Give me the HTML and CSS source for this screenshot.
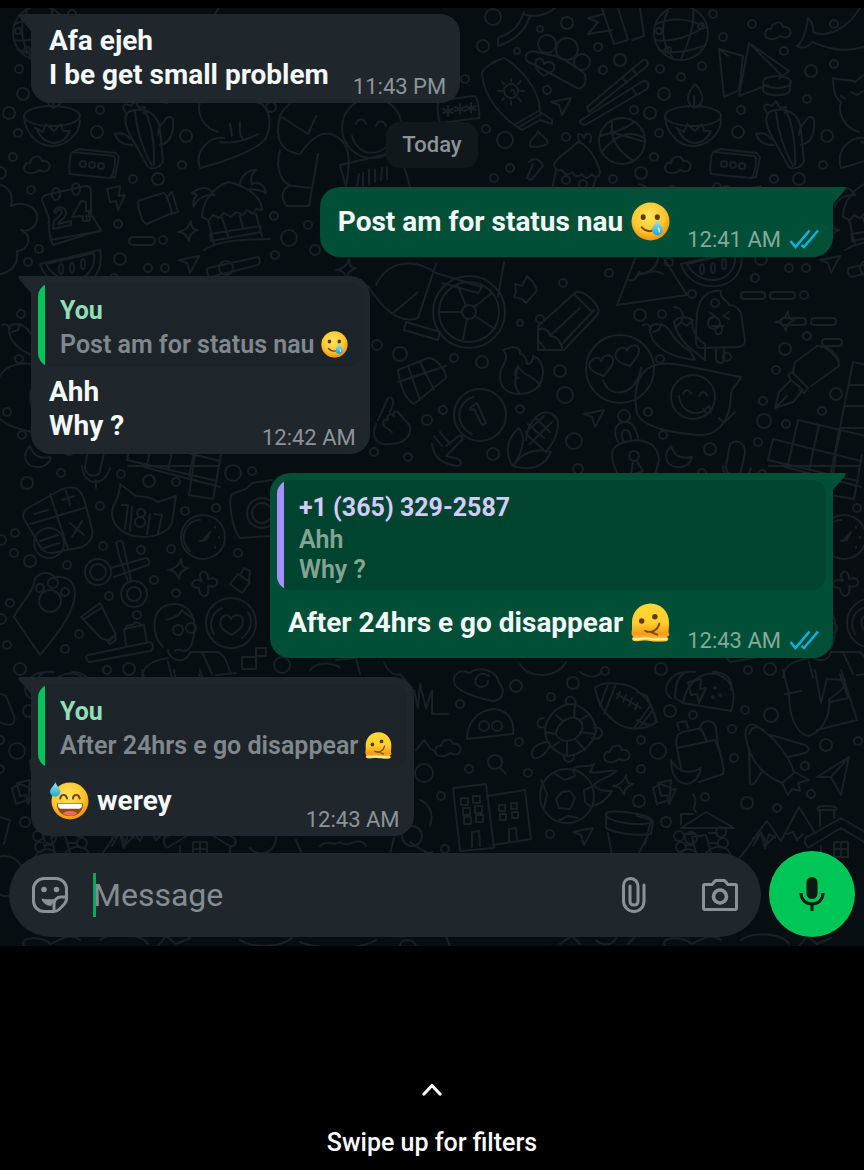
FILE: index.html
```
<!DOCTYPE html>
<html lang="en">
<head>
    <meta charset="UTF-8">
    <meta name="viewport" content="width=device-width, initial-scale=1">
    <title>Chat</title>
    <link rel="stylesheet" href="styles.css">
</head>
<body>
<!-- shared shapes -->
<svg class="defs" width="0" height="0" aria-hidden="true">
    <defs>
        <radialGradient id="skin" cx="45%" cy="35%" r="65%">
            <stop offset="0" stop-color="#ffe45c"/>
            <stop offset="0.65" stop-color="#fec62e"/>
            <stop offset="1" stop-color="#f4900c"/>
        </radialGradient>
        <linearGradient id="melt" x1="0" y1="0" x2="0" y2="1">
            <stop offset="0" stop-color="#fdd835"/>
            <stop offset="0.5" stop-color="#ffcf2e"/>
            <stop offset="0.8" stop-color="#f79a1b"/>
            <stop offset="1" stop-color="#ffd54a"/>
        </linearGradient>
        <linearGradient id="drop" x1="0" y1="0" x2="0" y2="1">
            <stop offset="0" stop-color="#9be8f5"/>
            <stop offset="1" stop-color="#1fa5d0"/>
        </linearGradient>
        <symbol id="tear" viewBox="0 0 40 40">
            <circle cx="20" cy="20" r="19.500" fill="url(#skin)"/>
            <ellipse cx="12.500" cy="15.500" rx="2.600" ry="3" fill="#5c3a0c"/>
            <ellipse cx="27" cy="15.500" rx="2.600" ry="3" fill="#5c3a0c"/>
            <path d="M11 26c4 4.500 10 5 13 2" fill="none" stroke="#6b4410" stroke-width="2" stroke-linecap="round"/>
            <path d="M27 18c1.500 4.500 5.500 7.500 5.500 10.500a5.500 5.500 0 0 1-11 0c0-3 4-6 5.500-10.500z" fill="url(#drop)"/>
            <path d="M28 27c1 1 1.500 2 1 3.500" fill="none" stroke="#c9f5fc" stroke-width="1.500" stroke-linecap="round"/>
        </symbol>
        <symbol id="melting" viewBox="0 0 40 40">
            <path d="M20 .5C9 .5 1 9 1 20c0 4 .3 6-.3 9-.5 2.500 0 4.500 1.800 5.500-2 1-2 4 1 4.500 4 .8 9-1 14-.3 5 .8 13 1.300 18.500.5 3-.5 3-3.500.5-4.500 3-.5 3.500-3 2-4.500C38.500 28 39 24 39 20 39 9 31 .5 20 .5z" fill="url(#melt)"/>
            <path d="M3 36.500c4 1.500 9-1 14-.2s13 1.200 19 .5" fill="none" stroke="#fff0a0" stroke-width="2" stroke-linecap="round"/>
            <circle cx="11" cy="18.500" r="2.800" fill="#5c3a0c"/>
            <circle cx="24.500" cy="14" r="2.800" fill="#5c3a0c"/>
            <path d="M14.500 28.500c6 3 13-.5 14.500-7.500M21 30l6 2.500" fill="none" stroke="#7a4d10" stroke-width="2" stroke-linecap="round"/>
        </symbol>
        <symbol id="sweat" viewBox="0 0 40 40">
            <circle cx="20.500" cy="20.500" r="19" fill="url(#skin)"/>
            <path d="M10.500 18c.5-5 6-5 7 0M23.500 18c.5-5 6-5 7 0" fill="none" stroke="#6b4410" stroke-width="2" stroke-linecap="round"/>
            <path d="M7 23h27c0 8-5.500 13-13.500 13S7 31 7 23z" fill="#8a4a12"/>
            <path d="M8 23.500h25c0 3-1 4.500-3 5H11c-2-.5-3-2-3-5z" fill="#fff"/>
            <path d="M13 33c4-3 11-3 15 0-4 3.500-11 3.500-15 0z" fill="#ef6a5a"/>
            <path d="M5.500 1c1 4 5 6 5 10a5.200 5.200 0 0 1-10.400 0C.1 7 4.500 5 5.500 1z" fill="url(#drop)"/>
        </symbol>
        <symbol id="ticks" viewBox="0 0 30 20">
            <path d="M1.500 12l5 6L20.500 1.500M12.500 16l2.500 2L29 1.500" fill="none" stroke="#0fb0dd" stroke-width="2.600"/>
        </symbol>
    </defs>
</svg>

<main class="chat">
    <svg class="wallpaper" viewBox="0 8 864 938" preserveAspectRatio="xMidYMin slice" aria-hidden="true">
        <g id="tile">
            <g id="dots"></g>
            <!-- globe -->
            <circle cx="40" cy="33" r="27"/>
            <path d="M27 11c-8 14-6 32 4 46M52 10c2 14-4 32-12 49M15 24c16-7 34-6 50 4M14 40c14 2 32-2 48-12M18 50c12 4 28 2 44-4"/>
            <circle cx="18" cy="31" r="3"/><circle cx="60" cy="26" r="3"/><circle cx="27" cy="50" r="3"/>
            <!-- clouds -->
            <path id="cloud" d="M26 172c-4-4-1-10 4-9 1-7 10-9 12-2 6-1 10 4 6 9-3 3-7 1-9 0-4 4-10 4-13 2z"/>
            <use href="#cloud" x="100" y="-134"/><use href="#cloud" x="411" y="583"/><use href="#cloud" x="580" y="589"/>
            <!-- folded paper and tape -->
            <path d="M78 49l5 48 15-7 4-34zM78 49l9 7M98 96l10-53 40 28-10 8M98 96l29-11M108 43l32 32"/>
            <ellipse cx="136" cy="82" rx="14" ry="6"/><path d="M122 82v8c2 7 26 7 27 0v-8"/>
            <!-- whale -->
            <path d="M156 46c6-4 9-14 11-28 4 4 6 9 5 14 12 6 35-2 48-26M156 46c8 4 12 0 15-4 18 8 38 12 58 2"/>
            <!-- oil lamp -->
            <ellipse cx="52" cy="116" rx="28" ry="10"/>
            <path d="M24 118c2 16 14 28 28 28s28-12 28-26M53 108c-10-6-6-16 1-24 8 8 12 20-1 24zM53 108v-12M35 128l8 4 3-8 8 7 7-7 2 7h7c-4 8-8 11-15 12-8 0-14-4-19-15z"/>
            <!-- cactus -->
            <path d="M148 167l-18-32c-6-12-8-24 5-25 16-2 24 8 25 20l3 32c-4 6-10 8-15 5zM135 112c2 18 8 38 17 54M145 111c6 12 10 32 9 54M126 113c-6-8-1-10 5-7l4-5 4 7 6-1-1 6M160 145c10-2 14-12 13-26-4-4-7-2-9 3-4 3-6 8-6 13M133 145c-10 0-16-4-18-11 6-2 12 0 15 5"/>
            <!-- voice box -->
            <path d="M73 152c-4 0-4 20-3 22l40 4c4-2 6-18 4-22l-41-4zM73 152l6-3 37 4 3 4-4 20-5 1"/>
            <circle cx="83" cy="164" r="3"/><circle cx="92" cy="165" r="3"/><circle cx="101" cy="166" r="3"/>
            <!-- fox -->
            <path d="M192 78c12 4 16 0 22 4l12-10 2 14c12 6 24 16 34 18 10 10 8 24 4 34-10 14-50 26-66 30-6-18 10-32 24-30M192 78c0 10 2 20 8 24-4 12 4 26 18 30M200 96l4 3M210 92l6 3 6-4M230 124l2 12M240 122c0 6-1 12 2 16M258 134c-10 6-26 10-38 8"/>
            <!-- calendar -->
            <path d="M42 200c0-4 3-5 12-7l32-7c5 0 5 4 5 8v20l10 16-48 15c-3-6-5-18-4-27l-7-18zM50 240l51-9M91 214l-2 7"/>
            <ellipse cx="56" cy="194" rx="4" ry="6"/><ellipse cx="76" cy="189" rx="4" ry="6"/>
            <path d="M54 212c3-7 12-6 12 1 0 5-6 7-8 11l13-3v4l-18 4 1-8c6-5 9-9 7-11-2-2-4 1-5 3zM83 221v-5l-11 1 9-16 5 1v9h3v5h-3l1 5z"/>
            <!-- bolts -->
            <path id="bolt" d="M107 189l13-3-1 10 6-1-7 15-2-9-6 1z"/>
            <use href="#bolt" x="-60" y="493"/><use href="#bolt" x="-90" y="594"/>
            <!-- video camera -->
            <path d="M138 201l25-8c4 0 8 16 9 20l-25 11c-6 0-9-19-9-23zM166 198l6-6 6 20-6 2"/>
            <!-- hut -->
            <path d="M202 217c0-16 12-30 26-35 20 4 34 16 34 28l-6-1-3 5-6-4-4 5-7-3-5 5-7-4-5 5-6-3-4 5zM208 220l6 24M256 214l6 22M210 234l50-8 1 6-50 9zM222 218l6 18M240 216l3 12M204 250c20-12 44-10 66-11M192 193c10-8 18-6 22 2-10 0-18 4-20 12-2-5 0-9 3-12zM240 186c0-10 8-16 16-16-6 6-6 10-4 14 6-3 12 0 14 9-6-4-16-4-20-4"/>
            <!-- pill and sparkles -->
            <rect x="129" y="237" width="26" height="8" rx="4"/>
            <path id="spark" d="M191 221c0 6 2 9 7 9-6 2-9 5-9 11-2-6-5-9-11-9 6-1 11-4 13-11z"/>
            <use href="#spark" x="-10" y="338"/><use href="#spark" x="435" y="554"/><use href="#spark" x="-44" y="90"/><use href="#spark" x="158" y="38"/>
            <!-- melon -->
            <path d="M40 264l60-14c4 22-8 34-24 36-18 2-32-8-36-22zM46 264l48-11c2 16-8 26-20 27-14 1-24-8-28-16z"/>
            <ellipse cx="61" cy="269" rx="2" ry="5"/><ellipse cx="72" cy="268" rx="2" ry="5"/><ellipse cx="83" cy="264" rx="2" ry="5"/>
            <!-- arrows -->
            <path id="dart" d="M179 260l20-4-9 17-3-10z"/>
            <use href="#dart" x="372" y="-158"/><use href="#dart" x="405" y="154"/><use href="#dart" x="394" y="572"/>
            <!-- flute -->
            <path d="M208 268l50-11c3 2 2 7 0 8l-48 12c-3-2-4-7-2-9z"/><circle cx="226" cy="268" r="7"/>
            <!-- flower at the edge -->
            <path d="M-2 184c10 2 16 10 13 22 14-6 28 2 26 14-2 10-12 12-16 10 12 6 8 20-4 21 2 16-8 22-20 24"/>
            <!-- person with phone -->
            <path d="M290 104c-8 6-9 10-10 12l28 18 8-18M280 116c-6 24 2 36 20 38 10-14 22-26 36-18 12 8 16 18 10 50M280 150c-6 22 4 34 12 36l20 2M318 154l-9 52h-22c-8-8-4-18 2-20"/>
            <circle cx="372" cy="128" r="30"/><path d="M356 124c2-6 8-6 10 0M376 126c2-6 8-6 10 0M352 136c6 22 32 22 40 2M340 165l60-14 10 36M340 165l6 22M357 186l2-12M363 186v-13M369 184v-14M375 182v-12M381 180l1-12M387 179v-12"/>
            <!-- bag, bamboo, phone -->
            <path d="M498 38c12-4 22-12 26-26M498 38v8c18-6 28-16 32-30M523 14c10 4 24 2 34-8M602 8l12 36 14-4-10-32M612 30l-24 4 10-12-10-4 16-4M640 8l4 28-12 4"/>
            <!-- teddy -->
            <circle cx="547" cy="44" r="9"/><circle cx="567" cy="49" r="11"/><circle cx="582" cy="62" r="8"/>
            <path d="M533 64c-14-4-6-16 4-12l18 4c12 4 20 10 30 18 2 10-2 15-8 14l-44-24zM536 60c6-4 8 2 8 4 4-4 12-2 10 6l-10 6c-6-4-10-8-8-16z"/>
            <!-- sun cream -->
            <path d="M482 74c0-6 14-14 22-16 14 8 36 30 36 54l12 8v4l-12-4-18 10c-20-12-38-32-40-56zM516 124l24-14M519 127l22-13"/>
            <circle cx="511" cy="91" r="7"/><path d="M511 91c1-3 5 0 3 3M511 79v2M511 101v4M498 91h4M520 91h4M502 82l2 2M518 98l3 3M502 100l2-2M518 84l3-3"/>
            <!-- chopsticks -->
            <path d="M587 107l56-47c4-1 6 3 4 6l-58 46zM581 120l62-39c5-1 7 5 4 8l-62 36c-4 0-6-3-4-5zM632 69l5 6M622 77l5 6M632 88l4 6"/>
            <!-- password -->
            <path d="M438 104c0-3 3-4 36-8 4 0 6 18 5 22l-38 5c-3-1-4-15-3-19zM448 106v10M443 109l10 4M443 113l10-4M460 104v10M455 107l10 4M455 111l10-4M471 103v10M466 106l10 4M466 110l10-4"/>
            <!-- basketball -->
            <circle cx="622" cy="141" r="23"/><path d="M612 121c-2 16 4 30 22 40M600 136c14-4 28-8 34-14M602 152c14-18 28-22 42-14M611 132l34 10"/>
            <!-- cupcake and sweets -->
            <path d="M554 164c6-10 14-12 24-22 8 2 18 14 22 30 0 6-6 6-8 2-4 6-8 4-10 0-4 4-8 2-10-2-4 4-8 2-10-2-4 2-8-2-8-6zM556 170l-4 20M596 178l-4 12M580 142c-6-10 2-10 4-4 2-8 10-4 6 4M530 146c-2-6 6-8 8-15 2 6 10 6 9 11 4 4-16 6-17 4zM529 162c6-6 12-2 14 4l-12 14-4-2 6-14"/>
            <circle cx="566" cy="180" r="4"/><circle cx="583" cy="184" r="4"/>
            <!-- helmet and wheel -->
            <circle cx="469" cy="312" r="36"/><circle cx="469" cy="312" r="30"/><circle cx="469" cy="312" r="7"/>
            <path d="M462 312h-23M466 306l-8-20M474 307l18-14M475 316l20 13M467 319l-4 20M376 285c12-26 40-26 60-12l46 14-4 6-36-10M436 264l-18 54c-16 6-32-4-50-32M392 314l26-22M404 330l34 10 2-8-34-10zM504 262l-6 34"/>
            <!-- puzzle, pencil -->
            <path d="M515 284l7 2 5-10 6 6 4 8-4 5-7 8-4-4-8-2 2-5z"/>
            <path d="M538 350v-24l38-34c8-2 26 14 22 22l-34 36zM538 330c6-4 12 2 12 6 6 0 10 4 12 12M552 334l28-26M562 344l32-34M574 294l18 18M538 340l8 10"/>
            <!-- mountain -->
            <path d="M617 305l22-56 14-8 34 54zM629 280c6 2 8-4 10-8 6 6 12-6 24 2"/>
            <!-- fire, clock -->
            <path d="M503 350c6 6 2 12-2 20-4 14 4 24 18 24 16 0 24-10 24-22 0-8-4-14-10-16 0 6-2 8-6 8 0-6-4-10-7-10 1-8-8-8-17-4zM520 394c-8-10-4-16-2-28 4 10 18 10 22 20M518 366c-4 6-4 10 0 12"/>
            <circle cx="480" cy="415" r="26"/><path d="M472 434c-20-10-14-34 2-37M470 408l7-5 9 20-4 2-8-16-3 1z"/>
            <!-- heart-eyes face -->
            <circle cx="620" cy="369" r="34"/><path d="M603 380c6 20 34 16 38-12M604 376c-14-4-18-10-12-16 4-4 8-2 9 1 2-6 10-8 12-2 1 6-4 10-9 17zM630 366c-14-4-18-10-12-16 4-4 8-2 9 1 2-6 10-8 12-2 1 6-4 10-9 17z"/>
            <!-- corn, lock -->
            <path d="M513 466c-10-14-4-30 6-38 6 8 6 20-6 38 6-10 20-20 38-14-6 14-20 20-38 14zM526 440c2-20 16-32 26-26 12 6 4 26-6 38M528 424l16 14M536 418l14 14M526 434l20 18M530 444l22-22M526 432l18-16"/>
            <path d="M612 456c0-10 6-14 26-16 14 2 20 8 21 20l-4 16h-36c-4-6-6-12-7-20zM618 442c-6-12-2-20 8-20 6 0 10 6 12 16M624 442c-4-8-2-12 2-12 3 0 4 3 5 9"/><circle cx="634" cy="456" r="5"/><path d="M633 461l-2 14 12-4-7-11"/>
            <!-- basket and hands -->
            <path d="M398 370l30-12c10 0 18 14 18 20l-32 26c-8-4-14-18-16-34zM398 382l48-16M408 366l12 34M420 362l14 28"/>
            <path d="M376 424c-6 14 2 22 14 20 12 0 22-6 20-18l-12-14c-4-2-6 2-4 4-4-4-8 0-6 4-4-2-6 2-4 6l8 6M378 420l10-22c4-2 6 2 5 6l-3 8M434 436l8 10M440 432l10 12M432 444c2 14 10 20 26 22 6-2 2-8-4-8l-8-2 16-16c2-4-2-6-6-2l-10 8"/>
            <!-- peppers -->
            <path d="M9 327c6-6 16-2 20 4 4 8 10 14 20 20l5 9c-18-2-34-8-42-20-3-6-4-9-3-13zM33 322c4-6 14-6 18-2 0 12 6 20 13 24v16l-10-8c-12-8-18-18-21-30zM12 332l6-2 2-6M34 328l6-6 6 4 6-6M2 325c4-2 6 0 8 4M41 320c2-6 0-12-8-13"/>
            <!-- ice lolly -->
            <path d="M60 348c-6 0-6-4-4-34 2-20 14-24 24-23-2 8 6 8 8 14 6 0 10 4 12 8l4 28c0 4-4 6-8 6zM75 348v12c2 4 7 4 8 0v-13M68 312l6 4-6 3M88 312l-6 4 6 3M71 326h12M74 327c0 10 7 10 7 0"/>
            <!-- dashes -->
            <rect x="100" y="292" width="24" height="7" rx="3"/><rect x="129" y="292" width="25" height="7" rx="3"/><circle cx="163" cy="295" r="4"/><rect x="140" y="318" width="25" height="7" rx="3"/><rect x="170" y="318" width="25" height="7" rx="3"/><rect x="181" y="339" width="20" height="7" rx="3"/>
            <!-- nib -->
            <path d="M134 408l4-16 12-12 12 10-10 12zM150 380l-3-5 4-3 16 16-4 5-5-3M152 372l2-10 22-16c8-2 24 14 22 20l-28 20M180 347c8-2 18 10 18 16M134 408l12-12"/>
            <!-- chat bubble -->
            <path d="M6 369c18-12 40-2 94 8-2 6-8 8-10 16 0 26-12 44-34 42-20-2-54-6-60-22-4-20 0-36 10-44z"/><circle cx="52" cy="397" r="22"/>
            <path d="M42 394c2-5 7-5 8 0M58 396c2-5 7-5 8 0M38 396c2 18 20 22 30 10l2 6-4 2-4-5M78 418l5 5 11-11"/>
            <!-- crossword -->
            <path d="M132 439l88 22M127 460l90 21M132 439l-5 21M157 420l68 16M157 420l-10 45M178 425l-10 45M200 430l-11 46M212 362l-22 110M212 362l14 3M208 385h18M204 406h20M200 428h24"/>
            <path d="M128 466l90 0M144 467l76 20M195 455l-6 40 24 4 8-44"/>
            <!-- moon and mic -->
            <path d="M30 446c-8 8-6 20 6 21 8 1 14-4 15-10-12 3-18-2-21-11zM89 444c8-6 18 0 14 14l-4 16c-8 4-14 0-14-8zM82 466c2 22 24 20 28 2M96 480v8"/>
            <!-- calculator -->
            <path d="M28 508l34-19c14-4 18 0 22 10l8 30c2 8-2 14-10 18l-30 6c-10 0-12-6-16-14l-12-20c-2-4 0-8 4-11zM30 524l54-16M50 494l18 55M62 500l12-4M66 491l4 14M34 514l14-4M70 523l14 12M82 521l-10 16"/><circle cx="49" cy="543" r="15"/><path d="M40 541l18-6M41 549l18-6"/>
            <!-- cat with 181 -->
            <path d="M120 484l16 12c8 0 16 2 22 6l18-6-4 26c-6 20-56 22-60-7-1-12 8-14 8-31zM122 505l6 0-3 24M132 507l-2 24M154 514l8 1-4 18M150 514l-3 20"/><circle cx="141" cy="513" r="4"/><circle cx="140" cy="522" r="5"/>
            <!-- gauge -->
            <circle cx="203" cy="537" r="22"/><path d="M190 551c-14-14-2-32 10-31M202 541l8-9-4 8-6 1zM215 527v1M219 537v1M215 547v1"/>
            <!-- scissors -->
            <circle cx="98" cy="572" r="13"/><circle cx="98" cy="572" r="8"/><circle cx="134" cy="594" r="13"/><circle cx="134" cy="594" r="7"/>
            <path d="M110 568l36-10c4 1 4 5 2 7l-34 12M128 581l-8-22-4-16c2-3 6-3 7 0l8 38"/>
            <!-- plus and bag -->
            <path d="M201 573c3-3 7-1 7 6 6-2 10 0 9 5-2 3-6 3-9 2 1 6 0 10-4 10-4-1-5-5-5-8-6 0-8-3-6-6 2-3 6-2 9-1-2-3-3-6-1-8zM230 584l8-10 12 8-8 11zM240 575l4-7 6 3-1 10"/>
            <!-- ice-cream cone -->
            <path d="M14 617c6-14 18-22 20-34 2-12 16-12 20-6 14-2 24 6 20 24-4 16-14 30-34 54z"/><circle cx="40" cy="588" r="4"/><circle cx="53" cy="583" r="5"/><circle cx="65" cy="592" r="4"/><circle cx="50" cy="601" r="11"/>
            <!-- tube and brush -->
            <path d="M81 617l19-14 16 32-7 6-8-3zM84 619l19-12M107 641l8-6 1 5-6 4zM88 655l62-13c4 2 4 8 0 9l-60 11c-4-1-5-6-2-7zM126 645l-2-16 20-4 3 17M126 629c-2-6 8-2 8-6 6-2 6 2 8 2"/>
            <!-- girl with glasses -->
            <path d="M163 647c-12-12-12-36 4-42 16-4 26 4 28 22-2 12-2 24-12 24-4-2-6-2-8 0M166 620c6-2 14-4 16-10 4 6 10 6 12 10M168 650c0 10 18 16 22 2M142 678c0-14 14-18 26-20M190 652l28 0c8 4 10 14 12 20M168 662l4 16M202 652l10 22"/><circle cx="178" cy="630" r="5"/><circle cx="191" cy="628" r="5"/>
            <!-- heart badge -->
            <circle cx="231" cy="623" r="25"/><path d="M231 635c-10-6-12-10-10-16 4-6 8-4 10 0 4-6 12-4 12 2 0 6-4 10-12 14zM214 634c-6-10-2-22 8-26M248 612c6 10 2 20-6 26"/>
            <!-- camera -->
            <path d="M232 494l14-5 6-6 20-3M232 494c-4 6 0 36 8 44l30-2"/><circle cx="262" cy="513" r="15"/><circle cx="262" cy="513" r="10"/><path d="M242 657h14v12h-14zM256 648h10v8h-10z"/>
            <!-- cloud refresh, alien -->
            <path d="M455 685c-4-12 6-16 14-12 12-8 28-2 30 10 8 8 2 18-6 18-12-2-32-8-38-16z"/><path d="M489 676c-8-6-16 2-13 8 4 6 12 2 12-3M467 739c0-16 10-28 26-30 14 0 22 12 20 25z"/><circle cx="484" cy="726" r="5"/><circle cx="497" cy="726" r="5"/>
            <circle cx="495" cy="762" r="7"/><path d="M500 768l6 6"/>
            <!-- turtle -->
            <path d="M545 732c0-14 12-26 24-28 14 0 26 14 27 26-2 14-14 24-28 26-12-2-22-12-23-24zM556 734c0-8 10-18 20-16 8 4 8 10 4 16-6 8-20 10-24 0zM545 732l11 2M556 715l7 6M575 704l-1 14M590 714l-10 6M595 734l-15-2M585 750l-9-10M567 756v-14M553 746l6-4M566 704c-2-10 10-10 10 1M546 726c-10 6-12-8-2-8M550 746c-8 14-20 16-18 6 2-6 6-8 14-10M564 756c0 8 10 8 10-1M594 728c10-4 12 14-2 10"/>
            <!-- rugby ball -->
            <path d="M595 688c8-8 36-6 46 6 10 8 14 20 16 28-14 10-34 8-44-2-10-8-16-20-18-32zM604 714l12-30M600 706l8-22M634 728l16-22M640 727l13-17M617 694l24 14M620 692l-3 6M626 695l-3 7M632 698l-3 8M638 703l-3 6"/>
            <!-- football -->
            <circle cx="567" cy="796" r="27"/><path d="M562 792l8-1 5 7-5 11-11-1-3-9zM555 774l10 6 10-4-2-6M541 780l6 14-3 14M594 786l-10 4 1 12 5 4M558 821l10-5 10 2M574 768c8-4 16 0 20-4l-4 8c8 2 16-2 26-1-8 8-18 8-22 14 4 6 10 6 18 6-6 10-14 14-20 15"/>
            <!-- buildings -->
            <path d="M453 788l33-4 8 64-34 3zM487 796l38-6 6 49-38 6M472 847v-15l7-1 1 15M509 841v-12l7-1 1 12M461 798h7v7h-7zM473 796h7v7h-7zM463 808h7v7h-7zM475 806h7v7h-7zM464 817h7v7h-7zM476 815h7v7h-7zM499 805h6v6h-6zM511 803h6v6h-6zM500 814h6v6h-6zM512 812h6v6h-6z"/>
            <!-- cup -->
            <path d="M606 814c0-6 48 0 47 8l-2 12c-12 2-34 0-45-6zM606 816c8 8 36 10 47 6M608 833l4 22M648 835l-10 20"/>
            <!-- taco -->
            <path d="M42 703c4-22 20-32 34-29 16 6 20 20 14 37zM42 703l-8-5c0-22 8-28 20-26M30 698c-12-8 0-26 14-26M72 672c14 0 20 8 18 18"/><circle cx="74" cy="688" r="1"/><circle cx="72" cy="697" r="1"/><circle cx="79" cy="695" r="1"/>
            <!-- jar and bananas -->
            <path d="M36 748l38-8c6 14 10 26 8 34l-24 8M36 748l4 20M36 748c-2-10 0-14 6-16l18-4 6 14M38 730l-2-7 9-2 2 7M59 730c0-12 16-12 16 0l2 14 6 26M30 760c0 30 26 30 30 8-10 6-22 6-30-8z"/>
            <!-- rocket -->
            <path d="M105 739c-2-10 2-16 8-14 20 10 36 32 40 48l-12 10c-20-8-32-24-36-44zM108 734c2-8 10-8 14-4M130 735l34 10c6 4 4 6 0 8l-16 4M108 748l1 36c4 4 8-8 12-12M141 783l6 12 4-6 8 2-2-8 11-3-14-8"/>
            <!-- legs and card -->
            <path d="M142 670l6 24c0 20 6 38 18 42 14-2 24-20 22-36 4-6 18-10 16-20l-18-1-6 24-6-33M144 694l16-3M176 730l40-10-16-50M189 702l18-4-8-24M216 675l20-2"/>
            <!-- paper plane -->
            <path d="M176 777l32-20-8 38-10-18zM190 777l18-20"/>
            <!-- log cabin -->
            <path d="M40 828l25-16 28 16zM40 824v-10h12M55 812c-6-6 4-8-3-18M55 853l-4-16 14-2 5 18"/><circle cx="38" cy="836" r="5"/><circle cx="40" cy="847" r="5"/><circle cx="80" cy="832" r="5"/><circle cx="82" cy="843" r="5"/><path d="M43 834h10M44 845h8M68 833h8M69 843h8"/>
            <!-- peaks and cottage -->
            <path d="M98 858c10-10 18-26 28-37l14 20 18-34 16 26M112 838l8-4 4 14 4-14 6 4M146 834l6-2 4 8 6-6M166 846c-4-4-2-10 2-10l32-18 34 20c4 4 0 10-4 8l-30-18-30 18c-2 2-4 2-4 0zM180 846v24M230 848v24M179 826v-16h14v8M178 811c-4-4 0-5 8-5s12 2 8 5M193 842h14v15h-14zM200 842v15M193 849h14"/>
            <!-- crowd along the bottom edge -->
            <path d="M-4 858c18-8 34 10 26 28-8 14-22 12-26 4M34 858c8-14 26-10 24 4M64 854c10-12 26-8 26 4M112 846l8-14 6 12 8-8M250 848c10 12 28 2 26-12M296 840l6 14M320 846c10-8 12 2 20-4 8 8 20-8 26 4M394 838l-4 16M410 842c10 6 18 14 22 10M24 946c-6-10 20-10 26-2 10-4 20-12 30-4M100 940c10-8 40-8 48 4M158 946l8-10 10 8 14-6M240 940c12 8 40 8 52-2M300 942c20 8 60 8 76-2M400 946c0-8 14-8 16 0M450 946l-4-10M560 944l12-8 8 8M596 940c6 6 16 6 20-2M628 944l8-8"/>
            <circle cx="50" cy="838" r="6"/><circle cx="412" cy="836" r="10"/><path d="M414 690l4 18 2-24 6 24 6-18 0 24h16"/><path d="M-4 692l10 4 8 20c2 8-2 10-10 8l-8-4M12 788l8-4 10 4-2 12-12 4zM416 750l8-10 6 8 6 4M420 800c10 4 14 14 10 26M-4 816l14 4-6 24"/>
            <path d="M310 670c10-12 30-4 30-2M336 660l20-2 4 16M384 662c4 10 10 14 16 12l12 14-10 6M520 664c8 16 38 14 46-2M580 672c8 6 16 6 22 0"/>
        </g>
        <use href="#tile" x="641"/>
    </svg>

    <article class="bubble in">
        <div class="body">
            <p class="text">Afa ejeh<br>I be get small problem</p>
            <time class="time">11:43 PM</time>
        </div>
    </article>

    <div class="day">Today</div>

    <article class="bubble out">
        <div class="body">
            <p class="text tall">Post am for status nau <svg class="emoji" role="img" aria-label="smiling face with tear"><use href="#tear"/></svg></p>
            <time class="time">12:41 AM</time>
            <svg class="ticks" role="img" aria-label="Read"><use href="#ticks"/></svg>
        </div>
    </article>

    <article class="bubble in">
        <blockquote class="quote green">
            <p class="name">You</p>
            <p class="quoted tall">Post am for status nau <svg class="emoji" role="img" aria-label="smiling face with tear"><use href="#tear"/></svg></p>
        </blockquote>
        <div class="body">
            <p class="text">Ahh<br>Why ?</p>
            <time class="time">12:42 AM</time>
        </div>
    </article>

    <article class="bubble out">
        <blockquote class="quote purple">
            <p class="name">+1 (365) 329-2587</p>
            <p class="quoted">Ahh<br>Why ?</p>
        </blockquote>
        <div class="body">
            <p class="text tall">After 24hrs e go disappear <svg class="emoji" role="img" aria-label="melting face"><use href="#melting"/></svg></p>
            <time class="time">12:43 AM</time>
            <svg class="ticks" role="img" aria-label="Read"><use href="#ticks"/></svg>
        </div>
    </article>

    <article class="bubble in">
        <blockquote class="quote green">
            <p class="name">You</p>
            <p class="quoted tall">After 24hrs e go disappear <svg class="emoji" role="img" aria-label="melting face"><use href="#melting"/></svg></p>
        </blockquote>
        <div class="body">
            <p class="text tall"><svg class="emoji" role="img" aria-label="grinning face with sweat"><use href="#sweat"/></svg> werey</p>
            <time class="time">12:43 AM</time>
        </div>
    </article>

    <form class="composer">
        <div class="field">
            <button type="button" class="icon" aria-label="Stickers">
                <svg width="36" height="36" viewBox="0 0 36 36" fill="none" stroke="#8b9297" stroke-width="3">
                    <path d="M12 1.500h12A10.500 10.500 0 0 1 34.500 12v10c0 2-1 4-2.500 5.500l-5 5c-1.500 1.500-3.500 2-5.500 2H12A10.500 10.500 0 0 1 1.500 24V12A10.500 10.500 0 0 1 12 1.500z"/>
                    <path d="M34 20h-5c-4 0-7 3-7 7v7"/>
                    <path d="M9.500 21.500c5 1 9 1 13.500.5l-4 7c-5-.5-9-3.500-9.500-7.500z" fill="#8b9297" stroke="none"/>
                    <circle cx="12" cy="12.500" r="2.800" fill="#8b9297" stroke="none"/>
                    <circle cx="24.500" cy="12.500" r="2.800" fill="#8b9297" stroke="none"/>
                </svg>
            </button>
            <span class="caret"></span>
            <input class="input" type="text" placeholder="Message" aria-label="Message">
            <button type="button" class="icon" aria-label="Attach">
                <svg width="24" height="36" viewBox="0 0 24 36" fill="none" stroke="#8b9297" stroke-width="3" stroke-linecap="round">
                    <path d="M22 8v16c0 6-4.500 10.500-10 10.500S1.500 30 1.500 24V9c0-4.500 3-7.500 7-7.500s7.500 3 7.500 7.500v15c0 2.500-1.700 4-4 4s-4-1.500-4-4V9"/>
                </svg>
            </button>
            <button type="button" class="icon camera" aria-label="Camera">
                <svg width="36" height="32" viewBox="0 0 36 32" fill="none" stroke="#8b9297" stroke-width="3" stroke-linejoin="round">
                    <path d="M3 5.500h7l3.500-4h9l3.500 4h7c1 0 1.500.5 1.500 1.500v22c0 1-.5 1.500-1.500 1.500H3c-1 0-1.500-.5-1.500-1.500V7c0-1 .5-1.500 1.500-1.500z"/>
                    <circle cx="18" cy="17.500" r="6.500" stroke-width="3.600"/>
                </svg>
            </button>
        </div>
        <button type="button" class="mic" aria-label="Voice message">
            <svg width="26" height="34" viewBox="0 0 26 34" fill="none" stroke="#0a1a12" stroke-width="3">
                <rect x="7.500" y="0" width="11" height="22" rx="5.500" fill="#0a1a12" stroke="none"/>
                <path d="M2 16c0 7 5 11 11 11s11-4 11-11M13 27v7"/>
            </svg>
        </button>
    </form>
</main>

<footer class="footer">
    <button type="button" class="swipe">
        <svg width="20" height="13" viewBox="0 0 20 13" fill="none" stroke="#fff" stroke-width="3.200" stroke-linecap="round" stroke-linejoin="round" aria-hidden="true"><path d="M2 11l8-8.500 8 8.500"/></svg>
        <span>Swipe up for filters</span>
    </button>
</footer>

<script>
    // small circles of the wallpaper: x, y, radius
    var dots = [
        [19,69,4],[23,94,6],[9,113,6],[18,133,4],[13,157,4],[100,110,4],[97,132,6],[186,136,6],[182,165,4],[133,179,4],
        [158,179,6],[31,190,4],[118,224,4],[39,249,4],[28,262,4],[120,259,6],[148,268,4],[165,268,4],[274,216,4],[275,255,4],
        [289,238,8],[308,225,4],[271,107,5],[315,250,5],[163,240,4],[493,17,8],[567,23,6],[540,29,3],[483,46,6],[517,51,3],
        [598,47,4],[620,60,6],[603,70,4],[40,77,4],[465,79,4],[547,90,4],[505,140,8],[566,137,4],[486,129,4],[510,168,4],
        [494,178,4],[634,110,4],[613,179,4],[0,173,6],[72,14,4],[82,37,4],[111,24,4],[143,51,4],[170,71,6],[193,24,4],
        [193,64,4],[61,66,4],[166,99,4],[563,283,4],[609,273,4],[114,278,4],[540,319,4],[520,323,3],[640,315,6],[21,314,4],
        [74,303,4],[51,294,4],[73,323,6],[144,349,6],[86,357,4],[166,336,4],[135,370,4],[19,359,4],[454,358,4],[482,362,6],
        [560,371,6],[565,395,8],[520,409,4],[443,410,4],[195,394,6],[181,411,4],[122,401,4],[123,421,7],[145,424,4],[117,442,4],
        [69,449,6],[22,435,4],[7,412,4],[624,416,6],[574,441,8],[493,454,6],[578,469,5],[377,345,5],[400,354,7],[374,452,4],
        [408,457,4],[427,420,5],[27,483,6],[61,473,4],[15,533,4],[1,540,5],[14,553,4],[30,561,6],[67,565,4],[100,506,4],
        [103,546,4],[141,550,4],[171,549,4],[149,481,6],[176,482,4],[185,511,4],[216,508,4],[233,473,8],[252,471,4],[238,553,4],
        [154,580,4],[109,596,4],[176,593,4],[137,615,4],[79,634,4],[65,649,4],[20,669,6],[10,603,4],[7,645,4],[1,619,5],
        [107,670,4],[129,669,6],[282,665,8],[121,474,4],[516,686,6],[573,683,6],[460,704,4],[551,697,4],[605,671,4],[519,742,4],
        [469,769,4],[528,773,4],[441,796,4],[0,740,4],[17,751,8],[0,769,4],[639,801,6],[29,711,6],[52,715,4],[104,710,4],
        [130,715,7],[91,729,4],[93,758,4],[185,745,6],[217,741,4],[164,766,4],[170,794,4],[106,803,6],[64,797,4],[25,822,5],
        [136,808,4],[550,834,4],[445,849,4],[424,773,9]
    ];
    var group = document.getElementById("dots");
    for(var i = 0; i < dots.length; i++){
        var dot = document.createElementNS("http://www.w3.org/2000/svg", "circle");
        dot.setAttribute("cx", dots[i][0]);
        dot.setAttribute("cy", dots[i][1]);
        dot.setAttribute("r", dots[i][2]);
        group.appendChild(dot);
    }
</script>
</body>
</html>
```
FILE: styles.css
```
*{
    padding: 0;
    margin: 0;
    box-sizing: border-box;
}
body{
    display: flex;
    flex-direction: column;
    min-height: 100vh;
    padding-top: 8px;
    background-color: #000;
    color: #f5f8f9;
    font-family: Roboto, "Liberation Sans", sans-serif;
}
button{
    border: none;
    background: none;
    color: inherit;
    font: inherit;
    cursor: pointer;
}
svg{
    display: block;
}
.defs{
    position: absolute;
}

/* chat */
.chat{
    position: relative;
    display: flex;
    flex-direction: column;
    gap: 19px;
    padding: 6px 31px 9px;
    background-color: #070e12;
    overflow: hidden;
}
.wallpaper{
    position: absolute;
    top: 0;
    left: 0;
    width: 100%;
    height: 100%;
    fill: none;
    stroke: #192125;
    stroke-width: 2;
    stroke-linecap: round;
    stroke-linejoin: round;
}
.day{
    position: relative;
    align-self: center;
    padding: 0 16px;
    border-radius: 14px;
    background-color: #10181c;
    color: #8d9498;
    font-size: 22px;
    font-weight: 500;
    line-height: 46px;
}

/* bubbles */
.bubble{
    position: relative;
    max-width: 90%;
    padding: 7px 7px 3px;
    border-radius: 20px;
}
.bubble:before{
    content: "";
    position: absolute;
    top: 0;
    width: 34px;
    height: 20px;
    background-color: inherit;
}
.in{
    align-self: flex-start;
    padding-bottom: 2px;
    border-top-left-radius: 0;
    background-color: #1f272d;
}
.in:before{
    left: -13px;
    clip-path: path("M2 0H34V20H13V17L1 3Q-1 0 2 0Z");
}
.out{
    align-self: flex-end;
    border-top-right-radius: 0;
    background-color: #004f36;
}
.out:before{
    right: -13px;
    clip-path: path("M32 0H0V20H21V17L33 3Q35 0 32 0Z");
}
.body{
    position: relative;
    display: flex;
    align-items: flex-end;
    padding: 3px 7px 0 11px;
}
.text{
    padding-bottom: 8px;
    font-size: 28px;
    font-weight: 700;
    line-height: 34px;
}
.in .text{
    padding-bottom: 9px;
}
.text.tall{
    line-height: 49px;
}
.emoji{
    display: inline-block;
    width: 39px;
    height: 39px;
    margin: 0 1px 4px;
    vertical-align: middle;
    overflow: visible;
}
.quoted .emoji{
    width: 27px;
    height: 27px;
    margin: 0 0 4px;
}
.time{
    margin-left: auto;
    padding-left: 16px;
    color: #8d9498;
    font-size: 22px;
    line-height: 28px;
    white-space: nowrap;
}
.in .time{
    padding-left: 24px;
}
.out .time{
    color: #84a99b;
}
.ticks{
    width: 30px;
    height: 20px;
    margin: 0 0 5px 8px;
}

/* quoted message */
.quote{
    position: relative;
    margin-bottom: 5px;
    padding: 10px 15px 5px 22px;
    border-radius: 14px;
    overflow: hidden;
    font-size: 25px;
    font-weight: 600;
}
.quote:before{
    content: "";
    position: absolute;
    top: 0;
    bottom: 0;
    left: 0;
    width: 7px;
}
.in .quote{
    background-color: #1c2429;
    color: #80888d;
}
.out .quote{
    background-color: #004430;
    color: #84a595;
}
.name{
    font-weight: 700;
    line-height: 35px;
}
.quoted{
    line-height: 30px;
}
.quoted.tall{
    line-height: 34px;
}
.green:before{
    background-color: #06c258;
}
.green .name{
    color: #92deb7;
}
.purple:before{
    background-color: #a78fff;
}
.purple .name{
    color: #d2ccfb;
}

/* message box */
.composer{
    position: relative;
    display: flex;
    align-items: flex-end;
    gap: 8px;
    margin: -4px -22px 0;
}
.field{
    flex: 1;
    display: flex;
    align-items: center;
    height: 84px;
    padding: 0 23px;
    border-radius: 42px;
    background-color: #1f272d;
}
.icon{
    flex: none;
}
.camera{
    margin-left: 56px;
}
.caret{
    width: 3px;
    height: 44px;
    margin: 0 -3px 0 25px;
    background-color: #06a85a;
}
.input{
    flex: 1;
    min-width: 0;
    height: 44px;
    border: none;
    outline: none;
    background: none;
    color: #f5f8f9;
    font: 32px/44px Roboto, "Liberation Sans", sans-serif;
}
.input::placeholder{
    color: #858d92;
    opacity: 1;
}
.mic{
    display: flex;
    align-items: center;
    justify-content: center;
    width: 86px;
    height: 86px;
    border-radius: 50%;
    background-color: #00c658;
}

/* footer */
.footer{
    margin-top: auto;
    padding: 60px 0 12px;
    text-align: center;
}
.swipe{
    display: inline-flex;
    flex-direction: column;
    align-items: center;
    gap: 32px;
    color: #fff;
    font-size: 25px;
    font-weight: 500;
    line-height: 30px;
}
```
